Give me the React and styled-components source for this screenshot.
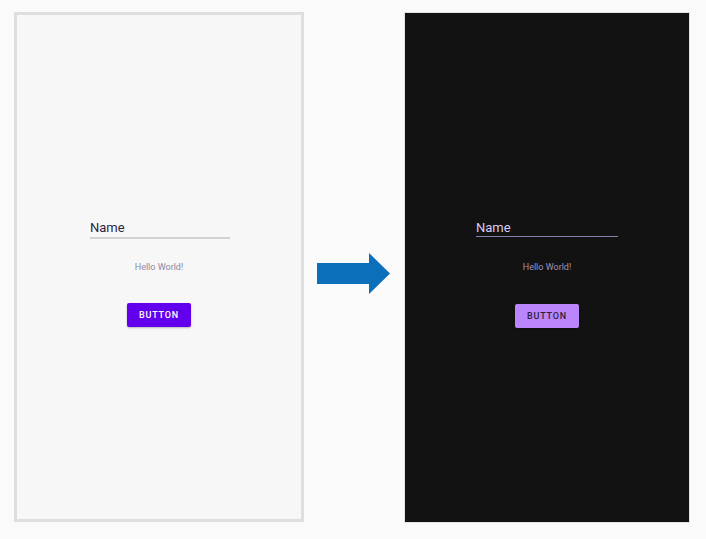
import React from "react";
import styled, { createGlobalStyle } from "styled-components";

const GlobalStyle = createGlobalStyle`
  html, body {
    margin: 0;
    padding: 0;
    background: #fafafa;
    font-family: Roboto, "Noto Sans", sans-serif;
  }
`;

const Page = styled.div`
  width: 706px;
  height: 539px;
  display: flex;
  align-items: flex-start;
  padding: 12px 0 0 14px;
  box-sizing: border-box;
`;

const Phone = styled.div`
  width: ${(p) => (p.dark ? "286px" : "290px")};
  height: ${(p) => (p.dark ? "511px" : "510px")};
  box-sizing: border-box;
  background: ${(p) => (p.dark ? "#121212" : "#f7f7f7")};
  border: ${(p) => (p.dark ? "1px solid #e2e2e2" : "3px solid #dedede")};
  display: flex;
  flex-direction: column;
  align-items: center;
  padding-top: ${(p) => (p.dark ? "206px" : "204px")};
`;

const Field = styled.div`
  width: ${(p) => (p.dark ? "142px" : "140px")};
  margin-left: ${(p) => (p.dark ? "0" : "2px")};
  display: flex;
  flex-direction: column;
`;

const FieldLabel = styled.span`
  font-size: 13px;
  line-height: 17px;
  color: ${(p) => (p.dark ? "#dccbf5" : "#2f2545")};
  padding-bottom: ${(p) => (p.dark ? "0" : "1px")};
`;

const Underline = styled.div`
  height: ${(p) => (p.dark ? "1px" : "2px")};
  background: ${(p) => (p.dark ? "#8c7cae" : "#d2d2d2")};
`;

const Hello = styled.div`
  margin-top: ${(p) => (p.dark ? "24px" : "22px")};
  font-size: 9px;
  line-height: 12px;
  color: ${(p) => (p.dark ? "#9f93b8" : "#8e86a2")};
`;

const Button = styled.button`
  margin-top: ${(p) => (p.dark ? "31px" : "30px")};
  width: 64px;
  height: 24px;
  border: none;
  border-radius: 2px;
  background: ${(p) => (p.dark ? "#bb86fc" : "#6200ee")};
  color: ${(p) => (p.dark ? "#2a1f3a" : "#ffffff")};
  font-family: Roboto, sans-serif;
  font-size: 9px;
  font-weight: 500;
  letter-spacing: 0.8px;
  box-shadow: 0 1px 2px rgba(0, 0, 0, 0.25);
  padding: 0;
`;

const ArrowSlot = styled.div`
  width: 100px;
  height: 510px;
  display: flex;
  align-items: center;
  justify-content: center;
  padding-top: 13px;
  box-sizing: border-box;
`;

const Screen = ({ dark }) => (
  <Phone dark={dark}>
    <Field dark={dark}>
      <FieldLabel dark={dark}>Name</FieldLabel>
      <Underline dark={dark} />
    </Field>
    <Hello dark={dark}>Hello World!</Hello>
    <Button dark={dark}>BUTTON</Button>
  </Phone>
);

const App = () => (
  <>
    <GlobalStyle />
    <Page>
      <Screen />
      <ArrowSlot>
        <svg width="74" height="41" viewBox="0 0 74 41">
          <path d="M0 10 H52 V0 L73 20.5 L52 41 V31 H0 Z" fill="#0b6fb9" />
        </svg>
      </ArrowSlot>
      <Screen dark />
    </Page>
  </>
);

export default App;
